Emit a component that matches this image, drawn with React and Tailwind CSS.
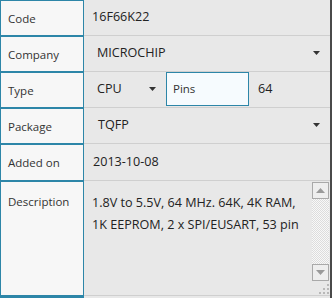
const Caret = () => (
  <svg width="7" height="4" viewBox="0 0 7 4" className="shrink-0">
    <path d="M0 0h7L3.5 4z" fill="#333" />
  </svg>
);

const Label = ({ children, h = 'h-[36px]', pt = 'pt-[9px]' }) => (
  <div className={`w-[84px] shrink-0 ${h} border border-[#2d86a8] bg-[#f7f7f7] pl-[7px] ${pt} text-[11.5px] text-[#333]`}>
    {children}
  </div>
);

const Row = ({ label, children, h = 'h-[36px]' }) => (
  <div className="flex">
    <Label h={h}>{label}</Label>
    <div className={`flex-1 ${h} border-b border-[#cfcfcf] bg-[#e8e8e8] flex items-center`}>
      {children}
    </div>
  </div>
);

const ScrollBtn = ({ up }) => (
  <div className="h-[17px] w-[17px] border border-[#a9a9a9] bg-[#eeeeee] flex items-center justify-center">
    <svg width="9" height="5" viewBox="0 0 9 5">
      <path d={up ? 'M0 5h9L4.5 0z' : 'M0 0h9L4.5 5z'} fill="#9a9a9a" />
    </svg>
  </div>
);

export default function App() {
  return (
    <div className="w-[335px] h-[298px] overflow-hidden bg-white font-['Open_Sans',sans-serif] text-[12.6px]">
      <div className="w-[332px] border-r-2 border-[#4a4a4a]">
        <Row label="Code">
          <span className="pl-[8px] text-[#222]">16F66K22</span>
        </Row>
        <Row label="Company">
          <div className="flex-1 flex items-center justify-between pl-[13px] pr-[10px] text-[#222]">
            <span>MICROCHIP</span>
            <Caret />
          </div>
        </Row>
        <Row label="Type">
          <div className="w-[82px] flex items-center justify-between pl-[13px] pr-[10px] text-[#222]">
            <span>CPU</span>
            <Caret />
          </div>
          <div className="w-[83px] h-[34px] border border-[#2d86a8] bg-[#f6fbfe] pl-[6px] pt-[7px] text-[11.5px] text-[#333] self-end mb-[1px]">
            Pins
          </div>
          <span className="pl-[9px] text-[#222]">64</span>
        </Row>
        <Row label="Package">
          <div className="flex-1 flex items-center justify-between pl-[14px] pr-[10px] text-[#222]">
            <span>TQFP</span>
            <Caret />
          </div>
        </Row>
        <Row label="Added on" h="h-[37px]">
          <span className="pl-[9px] text-[#222]">2013-10-08</span>
        </Row>
        <div className="flex">
          <Label h="h-[115px]" pt="pt-[11px]">Description</Label>
          <div className="flex-1 h-[115px] bg-[#e8e8e8] flex border-b border-[#cfcfcf]">
            <div className="flex-1 pl-[8px] pt-[11px] leading-[22px] text-[#222] whitespace-nowrap">
              1.8V to 5.5V, 64 MHz. 64K, 4K RAM,
              <br />
              1K EEPROM, 2 x SPI/EUSART, 53 pin
            </div>
            <div className="w-[17px] mr-[1px] flex flex-col">
              <div className="h-[1px]" />
              <ScrollBtn up />
              <div className="flex-1 bg-[repeating-conic-gradient(#dcdcdc_0_25%,#f8f8f8_0_50%)] bg-[length:2px_2px]" />
              <ScrollBtn />
              <div className="h-[14px] flex items-end justify-end pb-[1px]">
                <svg width="11" height="11" viewBox="0 0 11 11">
                  <g fill="#b8b8b8">
                    <rect x="9" y="1" width="2" height="2" />
                    <rect x="5" y="5" width="2" height="2" />
                    <rect x="9" y="5" width="2" height="2" />
                    <rect x="1" y="9" width="2" height="2" />
                    <rect x="5" y="9" width="2" height="2" />
                    <rect x="9" y="9" width="2" height="2" />
                  </g>
                </svg>
              </div>
            </div>
          </div>
        </div>
        <div className="flex h-[4px]">
          <div className="w-[84px] border-t-2 border-x border-[#2d86a8] bg-[#f7f7f7]" />
          <div className="flex-1 bg-[#e8e8e8]" />
        </div>
      </div>
    </div>
  );
}
